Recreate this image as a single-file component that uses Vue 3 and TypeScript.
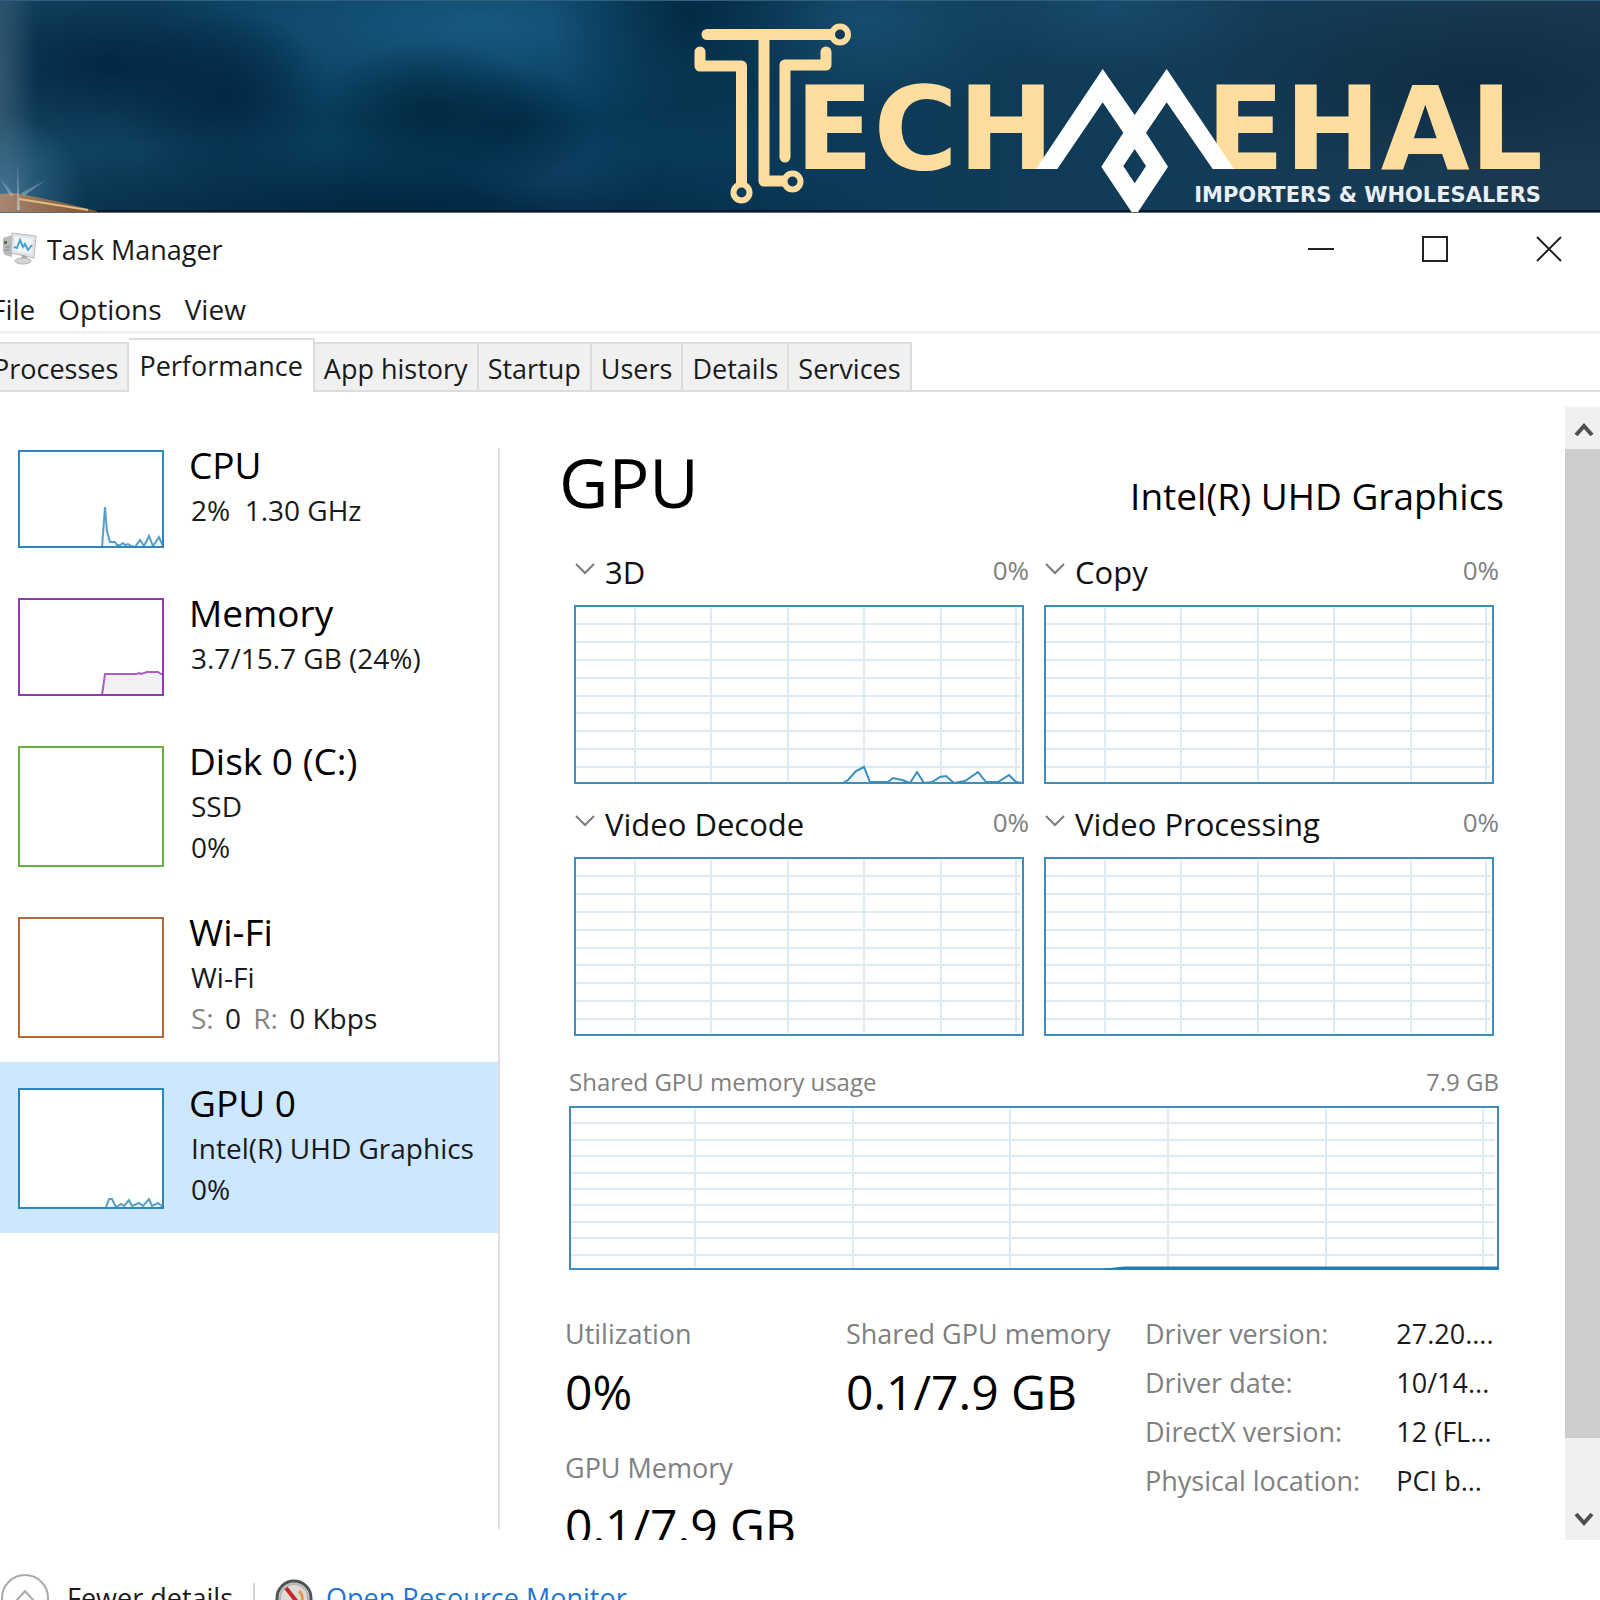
<script setup lang="ts">
import { ref } from 'vue'

type Point = [number, number]

interface Resource {
  name: string
  lines: string[]
  color: string
  height: number
  points: Point[]
  fill?: string
}

const menus = ['File', 'Options', 'View']
const tabs = ['Processes', 'Performance', 'App history', 'Startup', 'Users', 'Details', 'Services']
const activeTab = ref('Performance')
const selected = ref('GPU 0')

const resources: Resource[] = [
  {
    name: 'CPU',
    lines: ['2%\u00a0 1.30 GHz'],
    color: '#2f87b8',
    height: 98,
    fill: '#f1f6fa',
    points: [[84, 97], [87, 57], [89, 81], [92, 92], [97, 92], [99, 95], [102, 95], [105, 93], [107, 95], [110, 94], [113, 96], [117, 97], [122, 90], [126, 96], [131, 86], [135, 96], [141, 87], [145, 96]],
  },
  {
    name: 'Memory',
    lines: ['3.7/15.7 GB (24%)'],
    color: '#9439ae',
    height: 98,
    fill: '#f3f0f4',
    points: [[84, 97], [87, 76], [119, 76], [121, 75], [123, 76], [129, 74], [140, 74], [143, 76], [145, 76], [145, 97]],
  },
  { name: 'Disk 0 (C:)', lines: ['SSD', '0%'], color: '#69b13c', height: 121, points: [] },
  { name: 'Wi-Fi', lines: ['Wi-Fi', ''], color: '#b26b36', height: 121, points: [] },
  {
    name: 'GPU 0',
    lines: ['Intel(R) UHD Graphics', '0%'],
    color: '#2f87b8',
    height: 121,
    fill: '#f1f6fa',
    points: [[88, 119], [91, 111], [94, 111], [98, 119], [103, 116], [106, 118], [111, 112], [114, 118], [121, 115], [125, 118], [131, 111], [134, 118], [140, 115], [145, 119]],
  },
]

const engines: { name: string; points: Point[] }[] = [
  {
    name: '3D',
    points: [[269, 178], [274, 175], [282, 166], [290, 162], [296, 177], [314, 177], [319, 173], [328, 175], [336, 178], [343, 167], [350, 178], [358, 177], [366, 172], [372, 171], [380, 178], [391, 176], [404, 167], [412, 177], [424, 177], [435, 170], [442, 177], [448, 178]],
  },
  { name: 'Copy', points: [] },
  { name: 'Video Decode', points: [] },
  { name: 'Video Processing', points: [] },
]

const engineColumns = [61, 137, 214, 290, 367, 442]
const memoryColumns = [126, 284, 441, 599, 757, 914]
const rows = (height: number) => Array.from({ length: 9 }, (_, i) => Math.round(((i + 1) * height) / 10) + 1)
const engineRows = rows(179)
const memoryRows = rows(164)

const driver = [
  ['Driver version:', '27.20....'],
  ['Driver date:', '10/14...'],
  ['DirectX version:', '12 (FL...'],
  ['Physical location:', 'PCI b...'],
]

const path = (points: Point[]) => points.map((p) => p.join(',')).join(' ')
</script>

<template>
  <div class="page">
    <header class="banner">
      <svg class="glint" viewBox="0 0 110 213" aria-hidden="true">
        <defs>
          <linearGradient id="wood" x1="0" y1="0" x2="1" y2="0">
            <stop offset="0" stop-color="#a88672" />
            <stop offset="1" stop-color="#7d5128" />
          </linearGradient>
          <linearGradient id="ray" x1="0" y1="0" x2="0" y2="1">
            <stop offset="0" stop-color="#9fd0e6" stop-opacity="0" />
            <stop offset="1" stop-color="#d5ecf4" stop-opacity=".5" />
          </linearGradient>
        </defs>
        <path d="M0 194 L16 193 L60 202 L97 211 L97 213 L0 213Z" fill="url(#wood)" />
        <path d="M19 199 L88 210" stroke="#e2bd84" stroke-width="2" />
        <path d="M17 150 L20 210 L17 210Z M0 178 L14 195 L10 196Z M46 180 L24 196 L21 193Z" fill="url(#ray)" />
      </svg>
      <svg class="logo" viewBox="680 0 880 213" role="img" aria-label="Techmehal">
        <g fill="none" stroke="#ffdd9f" stroke-width="11" stroke-linecap="round" stroke-linejoin="round">
          <path d="M707 34.500H831M764 34.500V181H784" />
          <path d="M700 52V66H741.500V184" />
          <path d="M826 52V65H785V157" />
          <g stroke-width="6">
            <circle cx="840" cy="34.500" r="8" fill="#0d3a5b" />
            <circle cx="792.500" cy="181.500" r="8" fill="#0d3a5b" />
            <circle cx="741.500" cy="192.500" r="8" fill="#0d3a5b" />
          </g>
        </g>
        <text class="brand" x="795" y="169">ECH</text>
        <text class="brand" x="1206" y="169">EHAL</text>
        <path
          fill="#fff"
          fill-rule="evenodd"
          d="M1036 169L1102.700 69L1134.700 115L1166.700 69L1234 169H1212.700L1166.700 102.300L1146 132.700L1168 166.700L1138 212H1131.500L1101.300 166.700L1123.300 132.700L1102.700 102.300L1057.300 169Z M1134.700 149L1123.300 166L1134.700 183.300L1146 166Z"
        />
        <text class="tagline" x="1541" y="202">IMPORTERS &amp; WHOLESALERS</text>
      </svg>
    </header>

    <div class="titlebar">
      <svg class="app-icon" viewBox="0 0 34 34" aria-hidden="true">
        <path d="M0 6L9 3V25L2 23L0 20Z" fill="#b9babc" />
        <path d="M1 9H4V12H1Z" fill="#55704a" />
        <path d="M2 15H7M2 18H7" stroke="#8b8c8e" />
        <path d="M9 1L33 4L31 26L8 21Z" fill="#e3e3e4" stroke="#b8b9bb" />
        <path d="M12 4L30 7L28 22L11 18Z" fill="#f0f8fd" />
        <path d="M11 15L14 16L17 8L20 15L22 12L25 18L29 13" fill="none" stroke="#4a9fd0" stroke-width="2" />
        <path d="M19 23L24 24V28H18Z" fill="#a5a6a8" />
        <ellipse cx="20" cy="29" rx="8" ry="3" fill="#d4d4d5" stroke="#b3b3b5" />
      </svg>
      <h1>Task Manager</h1>
      <div class="window-buttons">
        <button type="button" aria-label="Minimize">
          <svg viewBox="0 0 26 26"><path d="M0 13H26" /></svg>
        </button>
        <button type="button" aria-label="Maximize">
          <svg viewBox="0 0 26 26"><path d="M1 1H25V25H1Z" /></svg>
        </button>
        <button type="button" aria-label="Close">
          <svg viewBox="0 0 26 26"><path d="M1 1L25 25M25 1L1 25" /></svg>
        </button>
      </div>
    </div>

    <nav class="menubar">
      <button v-for="menu in menus" :key="menu" type="button">{{ menu }}</button>
    </nav>

    <div class="tabs" role="tablist">
      <button
        v-for="tab in tabs"
        :key="tab"
        type="button"
        role="tab"
        :aria-selected="tab === activeTab"
        :class="{ active: tab === activeTab }"
        @click="activeTab = tab"
      >{{ tab }}</button>
    </div>

    <main class="content">
      <aside class="resources">
        <button
          v-for="item in resources"
          :key="item.name"
          type="button"
          class="resource"
          :class="{ selected: item.name === selected }"
          @click="selected = item.name"
        >
          <svg class="thumb" :viewBox="`0 0 146 ${item.height}`" :height="item.height" aria-hidden="true">
            <rect x="1" y="1" width="144" :height="item.height - 2" fill="#fff" />
            <polygon v-if="item.points.length" :points="path(item.points)" :fill="item.fill" />
            <polyline :points="path(item.points)" fill="none" :stroke="item.color" stroke-width="2" stroke-opacity=".8" />
            <rect x="1" y="1" width="144" :height="item.height - 2" fill="none" :stroke="item.color" stroke-width="2" />
          </svg>
          <span class="resource-text">
            <span class="resource-name">{{ item.name }}</span>
            <template v-for="(line, i) in item.lines" :key="i">
              <span v-if="line" class="resource-line">{{ line }}</span>
              <span v-else class="resource-line"><i>S:</i> 0 <i>R:</i> 0 Kbps</span>
            </template>
          </span>
        </button>
      </aside>
      <div class="divider"></div>

      <section class="details">
        <div class="heading">
          <h2>GPU</h2>
          <p>Intel(R) UHD Graphics</p>
        </div>

        <div class="engines">
          <article v-for="engine in engines" :key="engine.name" class="engine">
            <div class="engine-head">
              <button type="button">
                <svg viewBox="0 0 20 12" aria-hidden="true"><path d="M1 1L10 10L19 1" /></svg>
                <span>{{ engine.name }}</span>
              </button>
              <span class="percent">0%</span>
            </div>
            <svg class="graph" viewBox="0 0 450 179" preserveAspectRatio="none" aria-hidden="true">
              <path v-for="x in engineColumns" :key="x" class="grid" :d="`M${x} 3V176`" />
              <path v-for="y in engineRows" :key="y" class="grid" :d="`M2 ${y}H446`" />
              <polygon v-if="engine.points.length" :points="path(engine.points)" class="area" />
              <polyline :points="path(engine.points)" class="line" />
              <rect x="1" y="1" width="448" height="177" class="frame" />
            </svg>
          </article>
        </div>

        <div class="memory">
          <div class="memory-head">
            <span>Shared GPU memory usage</span>
            <span>7.9 GB</span>
          </div>
          <svg class="graph" viewBox="0 0 930 164" preserveAspectRatio="none" aria-hidden="true">
            <path v-for="x in memoryColumns" :key="x" class="grid" :d="`M${x} 3V161`" />
            <path v-for="y in memoryRows" :key="y" class="grid" :d="`M2 ${y}H926`" />
            <rect x="1" y="1" width="928" height="162" class="frame" />
            <path d="M536 163L556 161H929V163Z" class="used" />
          </svg>
        </div>

        <div class="stats">
          <dl>
            <dt>Utilization</dt>
            <dd>0%</dd>
            <dt>GPU Memory</dt>
            <dd>0.1/7.9 GB</dd>
          </dl>
          <dl>
            <dt>Shared GPU memory</dt>
            <dd>0.1/7.9 GB</dd>
          </dl>
          <table>
            <tbody>
              <tr v-for="[label, value] in driver" :key="label">
                <th scope="row">{{ label }}</th>
                <td>{{ value }}</td>
              </tr>
            </tbody>
          </table>
        </div>
      </section>

      <div class="scrollbar">
        <button type="button" aria-label="Scroll up">
          <svg viewBox="0 0 20 16"><path d="M2 15L10 6L18 15" /></svg>
        </button>
        <div class="thumb-bar"></div>
        <div class="track"></div>
        <button type="button" aria-label="Scroll down">
          <svg viewBox="0 0 20 16"><path d="M2 3L10 12L18 3" /></svg>
        </button>
      </div>
    </main>

    <footer class="footer">
      <div class="footer-row">
        <button type="button">
          <svg class="fewer" viewBox="0 0 50 50" aria-hidden="true">
            <circle cx="25" cy="25" r="23" />
            <path d="M16 28L25 18L34 28" />
          </svg>
          <span>Fewer details</span>
        </button>
        <span class="separator"></span>
        <a href="#resource-monitor">
          <svg class="gauge" viewBox="0 0 38 38" aria-hidden="true">
            <circle cx="19" cy="19" r="17" fill="#dedbd6" stroke="#4b5356" stroke-width="3" />
            <circle cx="19" cy="19" r="14" fill="none" stroke="#b3b5b5" stroke-width="2" />
            <path d="M24 12A10 10 0 0 1 25 26" fill="none" stroke="#e59a52" stroke-width="3" />
            <path d="M11 9L26 28" stroke="#c7262c" stroke-width="4" />
          </svg>
          <span>Open Resource Monitor</span>
        </a>
      </div>
    </footer>
  </div>
</template>

<style>
body {
  margin: 0;
  overflow: hidden;
}
</style>

<style scoped>
.page {
  display: flex;
  flex-direction: column;
  height: 100vh;
  overflow: hidden;
  background: #fff;
  color: #1a1a1a;
  font-family: "Open Sans", "Noto Sans", sans-serif;
  font-size: 27px;
}
button {
  margin: 0;
  padding: 0;
  border: 0;
  background: none;
  color: inherit;
  font: inherit;
  text-align: left;
}
h1, h2, p, dl, dd {
  margin: 0;
  font-weight: 400;
}
svg {
  display: block;
  flex: none;
}

.banner {
  display: flex;
  justify-content: space-between;
  flex: none;
  height: 212px;
  border-bottom: 1px solid #5b6b75;
  box-shadow: inset 0 -2px #03182a, inset 0 1px #2f5f7c;
  overflow: hidden;
  background:
    radial-gradient(circle 80px at 5px 195px, rgb(90 145 178 / 55%), transparent),
    radial-gradient(ellipse 36px 260px at 0 80px, rgb(62 98 120 / 75%), transparent),
    radial-gradient(ellipse 200px 80px at 110px 65px, rgb(0 34 62 / 85%), transparent),
    radial-gradient(ellipse 110px 90px at 225px 100px, rgb(0 36 64 / 80%), transparent),
    radial-gradient(ellipse 110px 70px at 430px 110px, rgb(0 38 60 / 85%), transparent),
    radial-gradient(ellipse 80px 60px at 515px 125px, rgb(0 38 62 / 70%), transparent),
    radial-gradient(ellipse 100px 50px at 560px 170px, rgb(18 66 102 / 70%), transparent),
    radial-gradient(ellipse 140px 130px at 690px 15px, rgb(0 38 62 / 85%), transparent),
    radial-gradient(ellipse 340px 100px at 480px 25px, rgb(26 92 132 / 90%), transparent),
    radial-gradient(ellipse 520px 70px at 380px 213px, rgb(0 36 62 / 90%), transparent),
    radial-gradient(ellipse 160px 90px at 870px 20px, rgb(28 84 118 / 70%), transparent),
    radial-gradient(ellipse 160px 70px at 1110px 5px, rgb(30 84 120 / 60%), transparent),
    radial-gradient(ellipse 300px 90px at 1480px 85px, rgb(10 40 62 / 70%), transparent),
    linear-gradient(90deg, #124360 0, #043a5a 30%, #0b3a58 50%, #123c58 75%, #1b384e 100%);
}
.glint {
  width: 110px;
  height: 213px;
}
.logo {
  width: 880px;
  height: 213px;
  margin-right: 40px;
}
.brand {
  fill: #ffdd9f;
  font: 700 115px "DejaVu Sans", sans-serif;
}
.tagline {
  fill: #e9eff5;
  font: 700 21px "DejaVu Sans", sans-serif;
  text-anchor: end;
}

.titlebar {
  display: flex;
  align-items: center;
  flex: none;
  height: 72px;
  padding: 0 38px 0 3px;
}
.app-icon {
  width: 34px;
  height: 34px;
}
.titlebar h1 {
  margin-left: 10px;
  font-size: 27px;
}
.window-buttons {
  display: flex;
  gap: 88px;
  margin-left: auto;
}
.window-buttons svg {
  width: 26px;
  height: 26px;
  fill: none;
  stroke: #222;
  stroke-width: 2;
}

.menubar {
  display: flex;
  flex: none;
  gap: 23px;
  height: 46px;
  margin-left: -9px;
  border-bottom: 3px solid #f0f0f0;
  font-size: 28px;
  line-height: 48px;
}

.tabs {
  display: flex;
  align-items: flex-end;
  flex: none;
  height: 58px;
  box-shadow: inset 0 -2px #dcdcdc;
}
.tabs button {
  box-sizing: border-box;
  height: 50px;
  padding: 0 9px;
  border: 2px solid #dcdcdc;
  border-left: 0;
  background: #f0f0f0;
  line-height: 50px;
  white-space: nowrap;
}
.tabs button:first-child {
  margin-left: -16px;
}
.tabs button.active {
  height: 54px;
  padding: 0 10px;
  border-bottom: 0;
  background: #fff;
}

.content {
  display: flex;
  flex: 1;
  min-height: 0;
  overflow: hidden;
}
.resources {
  flex: none;
  width: 498px;
  padding-top: 32px;
}
.resource {
  display: flex;
  width: 100%;
  padding: 26px 0 24px 18px;
}
.resource.selected {
  background: #cce7ff;
}
.thumb {
  width: 146px;
}
.resource-text {
  display: flex;
  flex-direction: column;
  height: 98px;
  margin-left: 25px;
}
.resource-name {
  color: #000;
  font-size: 37px;
  line-height: 30px;
  white-space: nowrap;
}
.resource-line {
  padding-left: 2px;
  font-size: 28px;
  line-height: 41px;
  white-space: pre;
}
.resource-line:nth-child(2) {
  margin-top: 10px;
}
.resource-line i {
  margin-right: 4px;
  color: #868686;
  font-style: normal;
}
.resource-line i + i {
  margin-left: 5px;
}
.divider {
  flex: none;
  width: 2px;
  margin: 56px 0 11px;
  background: #dedede;
}

.details {
  flex: 1;
  min-width: 0;
  padding: 50px 61px 0 59px;
}
.heading {
  display: flex;
  justify-content: space-between;
  height: 84px;
  color: #000;
}
.heading h2 {
  font-size: 68px;
  line-height: 80px;
}
.heading p {
  padding-top: 34px;
  font-size: 37px;
  line-height: 40px;
}
.engines {
  display: grid;
  grid-template-columns: 1fr 1fr;
  gap: 20px 10px;
  margin: 26px 5px 0 10px;
}
.engine-head {
  display: flex;
  justify-content: space-between;
  height: 53px;
}
.engine-head button {
  display: flex;
  color: #111;
  font-size: 31px;
  line-height: 40px;
}
.engine-head button svg {
  width: 20px;
  height: 12px;
  margin: 11px 10px 0 6px;
  fill: none;
  stroke: #7c7c7c;
  stroke-width: 2;
}
.percent,
.memory-head {
  color: #808080;
  font-size: 24px;
  line-height: 36px;
}
.percent {
  font-size: 26px;
}
.graph {
  box-sizing: border-box;
  width: 100%;
  height: 164px;
}
.engine .graph {
  width: calc(100% - 10px);
  height: 179px;
  margin: 0 5px;
}
.grid {
  fill: none;
  stroke: #dcebf3;
  stroke-width: 2;
}
.area {
  fill: #f1f6fa;
}
.line {
  fill: none;
  stroke: #3c8fbd;
  stroke-width: 2;
}
.frame {
  fill: none;
  stroke: #3c8fbd;
  stroke-width: 2;
}
.used {
  fill: #1f7bb0;
  stroke: #1f7bb0;
}
.memory {
  margin: 28px 5px 0 10px;
}
.memory-head {
  display: flex;
  justify-content: space-between;
  padding-bottom: 6px;
}

.stats {
  display: grid;
  grid-template-columns: 281fr 299fr 354fr;
  margin: 39px 5px 0 6px;
  white-space: nowrap;
}
dt,
th {
  color: #808080;
  font-weight: 400;
  line-height: 49px;
}
dd {
  color: #000;
  font-size: 48px;
  line-height: 68px;
}
dd + dt {
  margin-top: 17px;
}
table {
  align-self: start;
  border-collapse: collapse;
}
th,
td {
  height: 49px;
  padding: 0;
  line-height: 49px;
  text-align: left;
}
th {
  width: 71%;
}

.scrollbar {
  display: flex;
  flex-direction: column;
  flex: none;
  width: 35px;
  margin-top: 15px;
  background: #f0f0f0;
}
.scrollbar button {
  display: flex;
  align-items: center;
  justify-content: center;
  height: 42px;
}
.scrollbar svg {
  width: 20px;
  height: 16px;
  margin-left: 3px;
  fill: none;
  stroke: #505050;
  stroke-width: 4;
}
.thumb-bar {
  flex: 989;
  background: #cdcdcd;
}
.track {
  flex: 60;
}

.footer {
  flex: none;
  height: 60px;
  overflow: hidden;
}
.footer-row {
  display: flex;
  align-items: center;
  height: 116px;
}
.footer-row button,
.footer-row a {
  display: flex;
  align-items: center;
  line-height: 40px;
  white-space: nowrap;
}
.footer-row a {
  color: #1f74d4;
  text-decoration: none;
}
.fewer {
  width: 50px;
  height: 50px;
  margin-right: 17px;
  fill: none;
  stroke: #a9a9a9;
  stroke-width: 2;
}
.separator {
  width: 2px;
  height: 30px;
  margin: 0 20px;
  background: #d4d4d4;
}
.gauge {
  width: 38px;
  height: 38px;
  margin-right: 13px;
}
</style>
